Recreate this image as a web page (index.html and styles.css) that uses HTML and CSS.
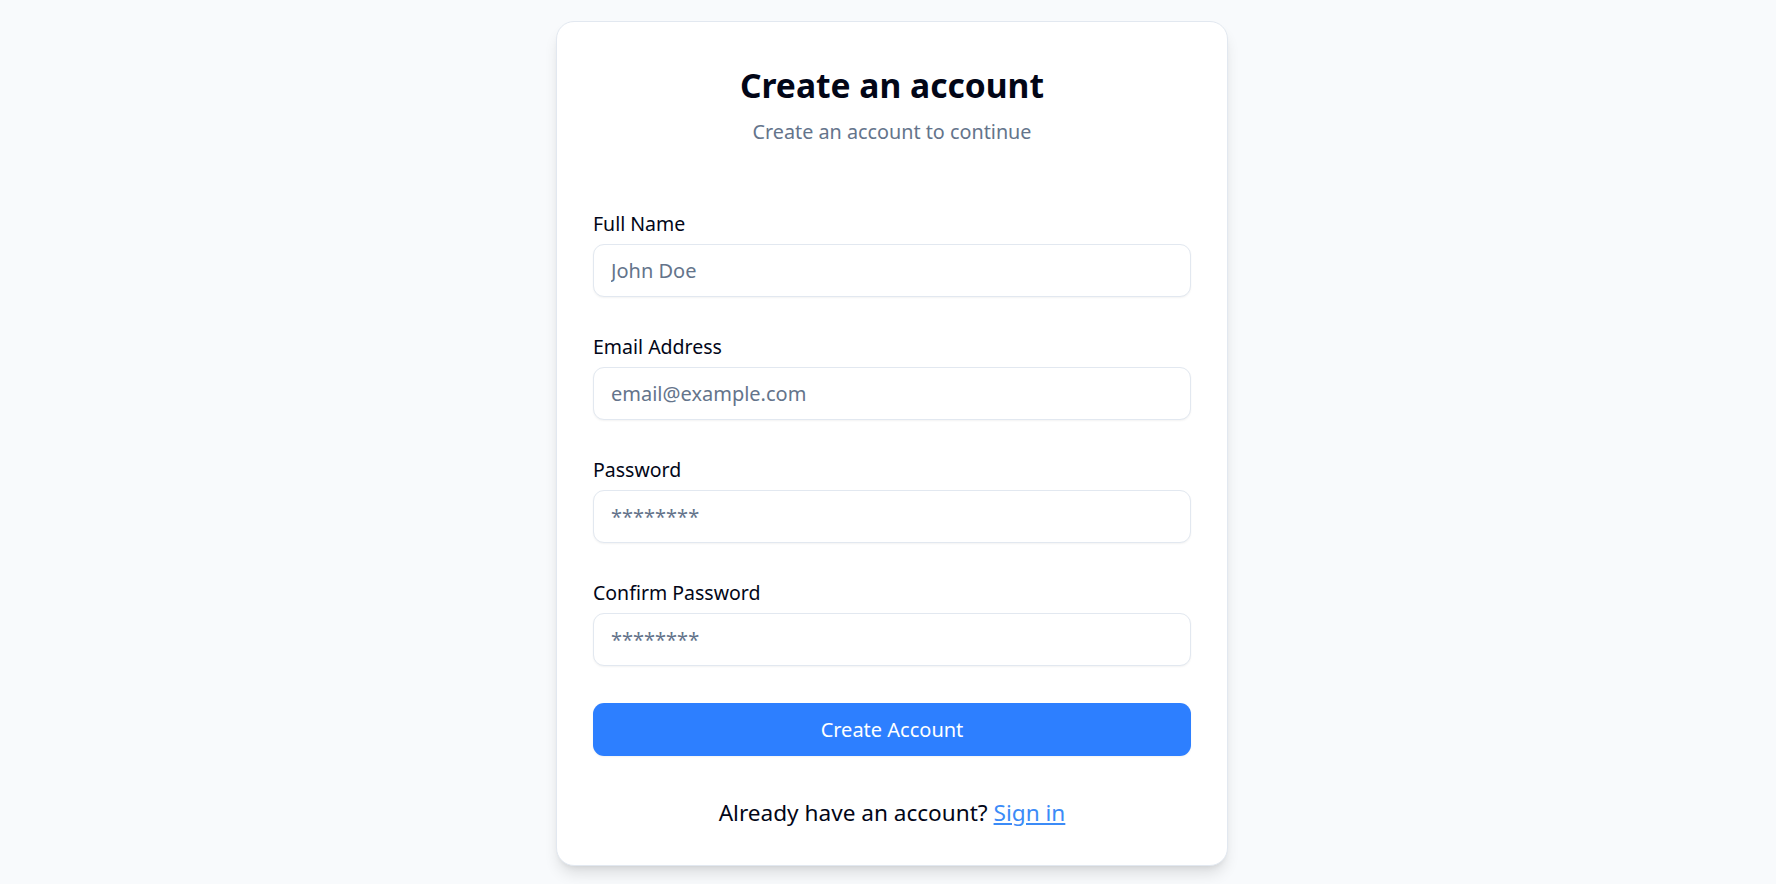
FILE: index.html
```html
<!DOCTYPE html>
<html lang="en">
<head>
<meta charset="utf-8">
<title>Create an account</title>
<link rel="stylesheet" href="styles.css">
</head>
<body>
<main class="page">
  <section class="card">
    <header class="card-head">
      <h1 class="title">Create an account</h1>
      <p class="subtitle">Create an account to continue</p>
    </header>
    <form class="form">
      <div class="field">
        <label class="label" for="name">Full Name</label>
        <input class="input" id="name" type="text" placeholder="John Doe">
      </div>
      <div class="field">
        <label class="label" for="email">Email Address</label>
        <input class="input" id="email" type="email" placeholder="email@example.com">
      </div>
      <div class="field">
        <label class="label" for="pw">Password</label>
        <input class="input" id="pw" type="text" placeholder="********">
      </div>
      <div class="field">
        <label class="label" for="pw2">Confirm Password</label>
        <input class="input" id="pw2" type="text" placeholder="********">
      </div>
      <button class="btn" type="button">Create Account</button>
    </form>
    <p class="footer">Already have an account? <a class="link" href="#">Sign in</a></p>
  </section>
</main>
</body>
</html>
```

FILE: styles.css
```css
* { box-sizing: border-box; }
html, body { margin: 0; padding: 0; }
body {
  background: #f8fafc;
  font-family: "Noto Sans", "Open Sans", "DejaVu Sans", sans-serif;
  color: #020617;
}
.page {
  display: flex;
  justify-content: center;
  padding: 21px 0 20px 8px;
}
.card {
  width: 672px;
  background: #ffffff;
  border: 1px solid #e2e8f0;
  border-radius: 18px;
  box-shadow: 0 10px 15px -3px rgba(0,0,0,0.12), 0 4px 6px -4px rgba(0,0,0,0.1);
  padding: 43px 36px 37.5px;
}
.card-head { text-align: center; }
.title {
  margin: 0;
  font-size: 33.6px;
  line-height: 40px;
  font-weight: 700;
  color: #020617;
}
.subtitle {
  margin: 13px 0 0;
  font-size: 19.8px;
  line-height: 28px;
  color: #64748b;
}
.form {
  display: flex;
  flex-direction: column;
  margin-top: 64px;
}
.field {
  display: flex;
  flex-direction: column;
  gap: 6px;
  margin-bottom: 36px;
}
.label {
  font-size: 19.5px;
  line-height: 28px;
  color: #020617;
}
.input {
  height: 53px;
  border: 1px solid #e2e8f0;
  border-radius: 11px;
  padding: 0 17px;
  font-family: inherit;
  font-size: 20px;
  color: #020617;
  background: #fff;
  box-shadow: 0 1px 2px rgba(0,0,0,0.05);
  outline: none;
}
.input::placeholder { color: #64748b; }
.btn {
  margin-top: 1px;
  height: 53px;
  border: none;
  border-radius: 11px;
  background: #2d7fff;
  color: #ffffff;
  font-family: inherit;
  font-size: 20px;
  box-shadow: 0 1px 2px rgba(0,0,0,0.05);
}
.footer {
  margin: 43px 0 0;
  text-align: center;
  font-size: 22.6px;
  line-height: 28px;
  color: #020617;
}
.link {
  color: #3b8bf7;
  text-decoration: underline;
}
```
